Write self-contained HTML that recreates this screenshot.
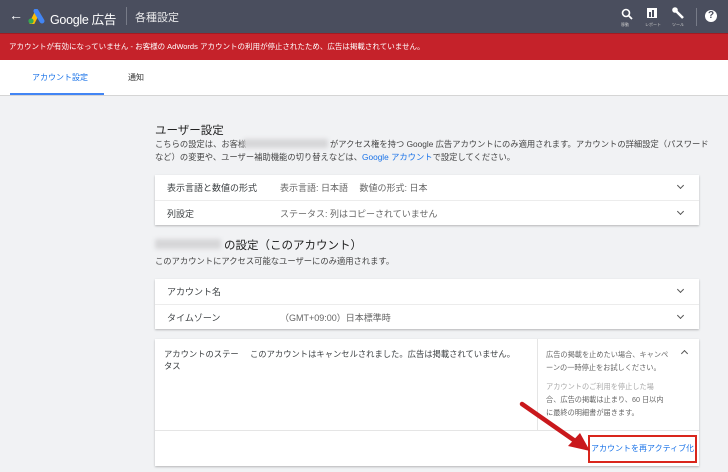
<!DOCTYPE html>
<html><head><meta charset="utf-8">
<style>
*{margin:0;padding:0;box-sizing:border-box}
body{width:728px;height:472px;overflow:hidden;background:#f1f2f4;font-family:"Liberation Sans","Noto Sans CJK JP",sans-serif;color:#3c4043;position:relative}
.a{position:absolute;white-space:nowrap}
.hdr{position:absolute;left:0;top:0;width:728px;height:33px;background:#4a4e5e}
.red{position:absolute;left:0;top:33px;width:728px;height:27px;background:#c5222a;border-top:1px solid #a01b22}
.tabs{position:absolute;left:0;top:60px;width:728px;height:36px;background:#fff;border-bottom:1px solid #d5d5d5}
.card{position:absolute;left:155px;width:544px;background:#fff;box-shadow:0 1px 2px rgba(0,0,0,.25)}
.row{position:absolute;left:0;width:544px;height:25px;border-top:1px solid #ececec;font-size:9px}
.chev{position:absolute;right:16px;width:5px;height:5px;border-right:1.3px solid #555;border-bottom:1.3px solid #555;transform:rotate(45deg)}
.blur{position:absolute;background:#d6d6d8;filter:blur(2px);border-radius:2px}
</style></head><body>
<div class="hdr"></div>
<div class="a" style="left:9px;top:7px;color:#fff;font-size:14px">←</div>
<svg class="a" style="left:27px;top:9px" width="18" height="15" viewBox="0 0 18 15">
<path d="M5 14 L10 4" stroke="#fbbc04" stroke-width="5" stroke-linecap="round"/>
<path d="M9 2 L15 12" stroke="#4285f4" stroke-width="5" stroke-linecap="round"/>
<circle cx="4" cy="12" r="2.6" fill="#34a853"/></svg>
<div class="a" style="left:50px;top:9px;color:#fff;font-size:12.5px;letter-spacing:-0.3px">Google 広告</div>
<div class="a" style="left:126px;top:7px;width:1px;height:18px;background:#777b88"></div>
<div class="a" style="left:135px;top:9px;color:#e8e8ea;font-size:11px">各種設定</div>
<svg class="a" style="left:621px;top:8px" width="12" height="12" viewBox="0 0 12 12"><circle cx="5" cy="5" r="3.5" stroke="#fff" stroke-width="1.6" fill="none"/><path d="M7.5 7.5L11 11" stroke="#fff" stroke-width="1.8"/></svg>
<div class="a" style="left:621px;top:22px;color:#ccc;font-size:4px">移動</div>
<div class="a" style="left:647px;top:8px;width:10px;height:10px;background:#fff"></div>
<div class="a" style="left:649px;top:12px;width:1.5px;height:5px;background:#4a4e5e"></div>
<div class="a" style="left:652px;top:10px;width:1.5px;height:7px;background:#4a4e5e"></div>
<div class="a" style="left:645px;top:22px;color:#ccc;font-size:4px">レポート</div>
<svg class="a" style="left:672px;top:7px" width="13" height="13" viewBox="0 0 13 13"><path d="M2 2 L11 11" stroke="#fff" stroke-width="2.6"/><circle cx="3" cy="3" r="2.8" fill="#fff"/></svg>
<div class="a" style="left:672px;top:22px;color:#ccc;font-size:4px">ツール</div>
<div class="a" style="left:696px;top:8px;width:1px;height:18px;background:#777b88"></div>
<div class="a" style="left:705px;top:10px;width:12px;height:12px;border-radius:50%;background:#fff;color:#4a4e5e;font-size:10px;font-weight:bold;text-align:center;line-height:12px">?</div>
<div class="red"></div>
<div class="a" style="left:9px;top:41px;color:#fff;font-size:7.5px">アカウントが有効になっていません - お客様の AdWords アカウントの利用が停止されたため、広告は掲載されていません。</div>
<div class="tabs"></div>
<div class="a" style="left:32px;top:72px;color:#1a73e8;font-size:8px">アカウント設定</div>
<div class="a" style="left:10px;top:93px;width:94px;height:2px;background:#4285f4"></div>
<div class="a" style="left:128px;top:72px;color:#333;font-size:8px">通知</div>

<div class="a" style="left:155px;top:122px;font-size:11.5px;color:#222">ユーザー設定</div>
<div class="a" style="left:155px;top:138px;font-size:8.3px;color:#444">こちらの設定は、お客様</div>
<div class="blur" style="left:243px;top:139px;width:85px;height:9px"></div>
<div class="a" style="left:330px;top:138px;font-size:8.3px;color:#444">がアクセス権を持つ Google 広告アカウントにのみ適用されます。アカウントの詳細設定（パスワード</div>
<div class="a" style="left:155px;top:151px;font-size:8.3px;color:#444">など）の変更や、ユーザー補助機能の切り替えなどは、<span style="color:#1a73e8">Google アカウント</span>で設定してください。</div>

<div class="card" style="top:175px;height:50px">
<div class="row" style="top:0;border-top:0"><span class="a" style="left:12px;top:6px">表示言語と数値の形式</span><span class="a" style="left:125px;top:6px;color:#666">表示言語: 日本語　 数値の形式: 日本</span><span class="chev" style="top:8px"></span></div>
<div class="row" style="top:25px"><span class="a" style="left:12px;top:6px">列設定</span><span class="a" style="left:125px;top:6px;color:#666">ステータス: 列はコピーされていません</span><span class="chev" style="top:8px"></span></div>
</div>

<div class="blur" style="left:155px;top:239px;width:66px;height:10px"></div>
<div class="a" style="left:224px;top:237px;font-size:11.5px;color:#222">の設定（このアカウント）</div>
<div class="a" style="left:155px;top:255px;font-size:8.3px;color:#444">このアカウントにアクセス可能なユーザーにのみ適用されます。</div>

<div class="card" style="top:279px;height:50px">
<div class="row" style="top:0;border-top:0"><span class="a" style="left:12px;top:6px">アカウント名</span><span class="chev" style="top:8px"></span></div>
<div class="row" style="top:25px"><span class="a" style="left:12px;top:6px">タイムゾーン</span><span class="a" style="left:125px;top:6px;color:#666">（GMT+09:00）日本標準時</span><span class="chev" style="top:8px"></span></div>
</div>

<div class="card" style="top:339px;height:127px;font-size:8.3px">
<span class="a" style="left:9px;top:9px">アカウントのステー</span>
<span class="a" style="left:9px;top:21px">タス</span>
<span class="a" style="left:95px;top:9px">このアカウントはキャンセルされました。広告は掲載されていません。</span>
<div class="a" style="left:382px;top:0;width:1px;height:91px;background:#e5e5e5"></div>
<div class="a" style="left:391px;top:9px;font-size:7.2px;color:#666;line-height:13px">広告の掲載を止めたい場合、キャンペ<br>ーンの一時停止をお試しください。</div>
<div class="a" style="left:391px;top:41px;font-size:7.2px;color:#666;line-height:13px"><span style="color:#aaa">アカウントのご利用を停止した場</span><br>合、広告の掲載は止まり、60 日以内<br>に最終の明細書が届きます。</div>
<div class="a" style="left:527px;top:12px;width:5px;height:5px;border-left:1.3px solid #555;border-top:1.3px solid #555;transform:rotate(45deg)"></div>
<div class="a" style="left:0;top:91px;width:544px;height:1px;background:#e5e5e5"></div>
<div class="a" style="left:436px;top:104px;color:#1a73e8;font-size:8px">アカウントを再アクティブ化</div>
</div>
<div class="a" style="left:588px;top:435px;width:109px;height:28px;border:2px solid #d9261c"></div>
<svg class="a" style="left:518px;top:400px" width="75" height="55" viewBox="0 0 75 55">
<path d="M4 4 L60 43" stroke="#c9181c" stroke-width="4.5" stroke-linecap="round"/>
<path d="M72 51 L50 46 L62 33 Z" fill="#c9181c"/></svg>
</body></html>
